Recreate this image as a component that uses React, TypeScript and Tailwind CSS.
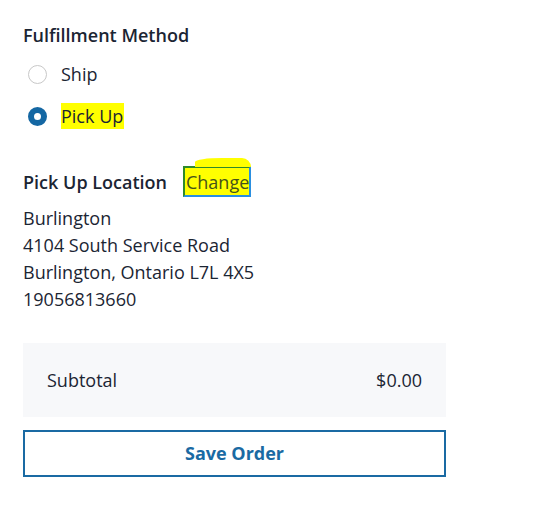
import React from 'react';

// Fulfillment selection panel
const address = [
  'Burlington',
  '4104 South Service Road',
  'Burlington, Ontario L7L 4X5',
  '19056813660',
];

function Radio({ checked, label, highlight }: { checked: boolean; label: string; highlight?: boolean }) {
  return (
    <label className="flex items-center gap-[14px] h-[26px]">
      {checked ? (
        <span className="w-[19px] h-[19px] rounded-full border-[6px] border-[#1467a3] bg-white" />
      ) : (
        <span className="w-[19px] h-[19px] rounded-full border border-[#c8c8c8] bg-white" />
      )}
      <span className={highlight ? 'bg-[#ffff00] pr-[1px] leading-[26px]' : 'leading-[26px]'}>{label}</span>
    </label>
  );
}

export default function App() {
  return (
    <div
      className="bg-white w-[537px] h-[509px] pt-[23px] pl-[23px] text-[#1b2533]"
      style={{ fontFamily: '"Open Sans", sans-serif' }}
    >
      <h2 className="text-[18px] font-semibold leading-[24px]">Fulfillment Method</h2>

      <div className="mt-[14px] flex flex-col gap-[16px] pl-[5px] text-[18px]">
        <Radio checked={false} label="Ship" />
        <Radio checked={true} label="Pick Up" highlight />
      </div>

      <div className="mt-[37px] flex items-center gap-[16px]">
        <h3 className="text-[18px] font-semibold leading-[24px]">Pick Up Location</h3>
        <button className="relative h-[31px] pl-[1px] pr-0 text-[18px] text-[#46531a] bg-[#ffff00] border-2 border-[#2a8fe0] border-t-[#2f8a2a] border-l-[#2f8a2a] leading-[26px]">
          <span className="absolute -top-[10px] left-[10px] right-[-2px] h-[9px] bg-[#ffff00] rounded-tr-[20px] rounded-tl-[60px_9px]" />
          Change
        </button>
      </div>

      <div className="mt-[8px] text-[18px] leading-[27px]">
        {address.map((line, i) => (
          <div key={i}>{line}</div>
        ))}
      </div>

      <div className="mt-[30px] w-[423px] h-[74px] bg-[#f7f8fa] flex items-center justify-between px-[24px] text-[18px]">
        <span>Subtotal</span>
        <span>$0.00</span>
      </div>

      <button className="mt-[13px] w-[423px] h-[47px] border-2 border-[#1a6aa3] text-[#1a6aa3] text-[18px] font-bold">
        Save Order
      </button>
    </div>
  );
}
